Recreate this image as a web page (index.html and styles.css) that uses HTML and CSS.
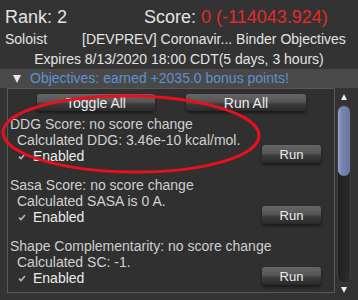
FILE: index.html
```html
<!DOCTYPE html>
<html lang="en">
<head>
  <meta charset="UTF-8" />
  <meta name="viewport" content="width=device-width, initial-scale=1.0">
  <title>Objectives</title>
  <link rel="stylesheet" href="styles.css">
</head>
<body>
  <div class="header">
    <div class="line-big">
      <span class="rank">Rank: 2</span>
      <span>Score: <span class="score">0 (-114043.924)</span></span>
    </div>
    <div class="line">
      <span class="role">Soloist</span>
      <span>[DEVPREV] Coronavir... Binder Objectives</span>
    </div>
    <div class="line center">Expires 8/13/2020 18:00 CDT(5 days, 3 hours)</div>
  </div>

  <div class="bar">
    <span class="tri"></span>
    <span class="bar-text">Objectives: earned +2035.0 bonus points!</span>
  </div>

  <div class="main">
    <div class="panel">
      <div class="btn-row">
        <button class="btn wide">Toggle All</button>
        <button class="btn wide2">Run All</button>
      </div>

      <div class="obj">
        <div class="obj-text">
          <div class="title">DDG Score: no score change</div>
          <div class="calc">Calculated DDG: 3.46e-10 kcal/mol.</div>
          <div class="enabled"><svg class="check" width="8" height="7" viewBox="0 0 8 7"><path d="M1 3.6 L3 5.6 L7 1" fill="none" stroke="#b8b8b8" stroke-width="1.5"/></svg>Enabled</div>
        </div>
        <button class="btn run">Run</button>
      </div>

      <div class="obj">
        <div class="obj-text">
          <div class="title">Sasa Score: no score change</div>
          <div class="calc">Calculated SASA is 0 A.</div>
          <div class="enabled"><svg class="check" width="8" height="7" viewBox="0 0 8 7"><path d="M1 3.6 L3 5.6 L7 1" fill="none" stroke="#b8b8b8" stroke-width="1.5"/></svg>Enabled</div>
        </div>
        <button class="btn run">Run</button>
      </div>

      <div class="obj">
        <div class="obj-text">
          <div class="title">Shape Complementarity: no score change</div>
          <div class="calc">Calculated SC: -1.</div>
          <div class="enabled"><svg class="check" width="8" height="7" viewBox="0 0 8 7"><path d="M1 3.6 L3 5.6 L7 1" fill="none" stroke="#b8b8b8" stroke-width="1.5"/></svg>Enabled</div>
        </div>
        <button class="btn run">Run</button>
      </div>
    </div>

    <div class="scroll">
      <span class="arrow up"></span>
      <div class="track"><div class="thumb"></div></div>
      <span class="arrow down"></span>
    </div>
  </div>

  <!-- annotation drawn over the first objective -->
  <svg class="mark" width="358" height="300">
    <ellipse cx="131" cy="134" rx="128" ry="38" fill="none" stroke="#e8101c" stroke-width="3" transform="rotate(0.8 131 134)"/>
  </svg>
</body>
</html>
```

FILE: styles.css
```css
body {
  margin: 0;
  background-color: #333;
  color: #e4e4e4;
  font-family: "Liberation Sans", Arial, sans-serif;
  font-size: 14px;
  width: 358px;
  height: 300px;
  overflow: hidden;
  position: relative;
}

.header {
  padding-top: 5px;
  white-space: nowrap;
}

.line-big {
  display: flex;
  font-size: 18px;
  line-height: 24px;
  padding-left: 5px;
}

.rank {
  width: 139px;
}

.score {
  color: #e42a28;
}

.line {
  display: flex;
  line-height: 20px;
  padding-left: 5px;
}

.role {
  width: 77px;
}

.center {
  justify-content: center;
  padding-left: 0;
}

.bar {
  display: flex;
  align-items: center;
  height: 19px;
  line-height: 19px;
  background-color: #494949;
}

.tri {
  width: 0;
  height: 0;
  margin-left: 13px;
  margin-right: 9px;
  border-left: 4.5px solid transparent;
  border-right: 4.5px solid transparent;
  border-top: 8px solid #e8e8e8;
}

.bar-text {
  color: #5e91d2;
}

.main {
  display: flex;
}

.panel {
  margin-left: 7px;
  width: 326px;
  height: 198px;
  border: 1px solid #585858;
  background-color: #303030;
  padding-top: 5px;
  box-sizing: content-box;
  overflow: hidden;
}

.btn-row {
  display: flex;
  gap: 31px;
  padding-left: 29px;
  margin-bottom: 5px;
}

.btn {
  font-family: inherit;
  font-size: 14px;
  color: #ececec;
  height: 17px;
  line-height: 18px;
  padding: 0;
  border: none;
  border-radius: 3px;
  background: linear-gradient(#666 0%, #565656 45%, #3a3a3a 60%, #2a2a2a 100%);
  box-shadow: 0 2px 3px rgba(0, 0, 0, 0.5);
  flex-shrink: 0;
}

.wide {
  width: 118px;
}

.wide2 {
  width: 120px;
}

.obj {
  display: flex;
  align-items: flex-end;
  justify-content: space-between;
  margin-bottom: 12px;
  padding-right: 13px;
}

.obj-text {
  flex: 1;
  min-width: 0;
  white-space: nowrap;
}

.title {
  line-height: 16px;
  padding-left: 2px;
  color: #cfcfcf;
}

.calc {
  line-height: 16px;
  padding-left: 9px;
  color: #d2d2d2;
}

.enabled {
  display: flex;
  align-items: center;
  line-height: 17px;
  padding-left: 10px;
  color: #ececec;
}

.check {
  margin-right: 7px;
}

.run {
  width: 59px;
  height: 18px;
  font-size: 13px;
  line-height: 20px;
  margin-bottom: 2px;
}

.scroll {
  width: 14px;
  margin-left: 2px;
  display: flex;
  flex-direction: column;
  align-items: center;
}

.arrow {
  width: 0;
  height: 0;
  border-left: 3.5px solid transparent;
  border-right: 3.5px solid transparent;
}

.up {
  margin-top: 6px;
  border-bottom: 6px solid #f0f0f0;
}

.down {
  margin-top: 4px;
  border-top: 6px solid #f0f0f0;
}

.track {
  margin-top: 5px;
  width: 14px;
  height: 178px;
  border-radius: 7px;
  background: linear-gradient(90deg, #202020, #2c2c2c);
  border: 1px solid #3e3e3e;
  box-sizing: border-box;
}

.thumb {
  height: 70px;
  border-radius: 7px;
  background: linear-gradient(90deg, #9aa4c8 0%, #7a86b2 30%, #6a76a2 100%);
}

.mark {
  position: absolute;
  left: 0;
  top: 0;
  pointer-events: none;
}
```
